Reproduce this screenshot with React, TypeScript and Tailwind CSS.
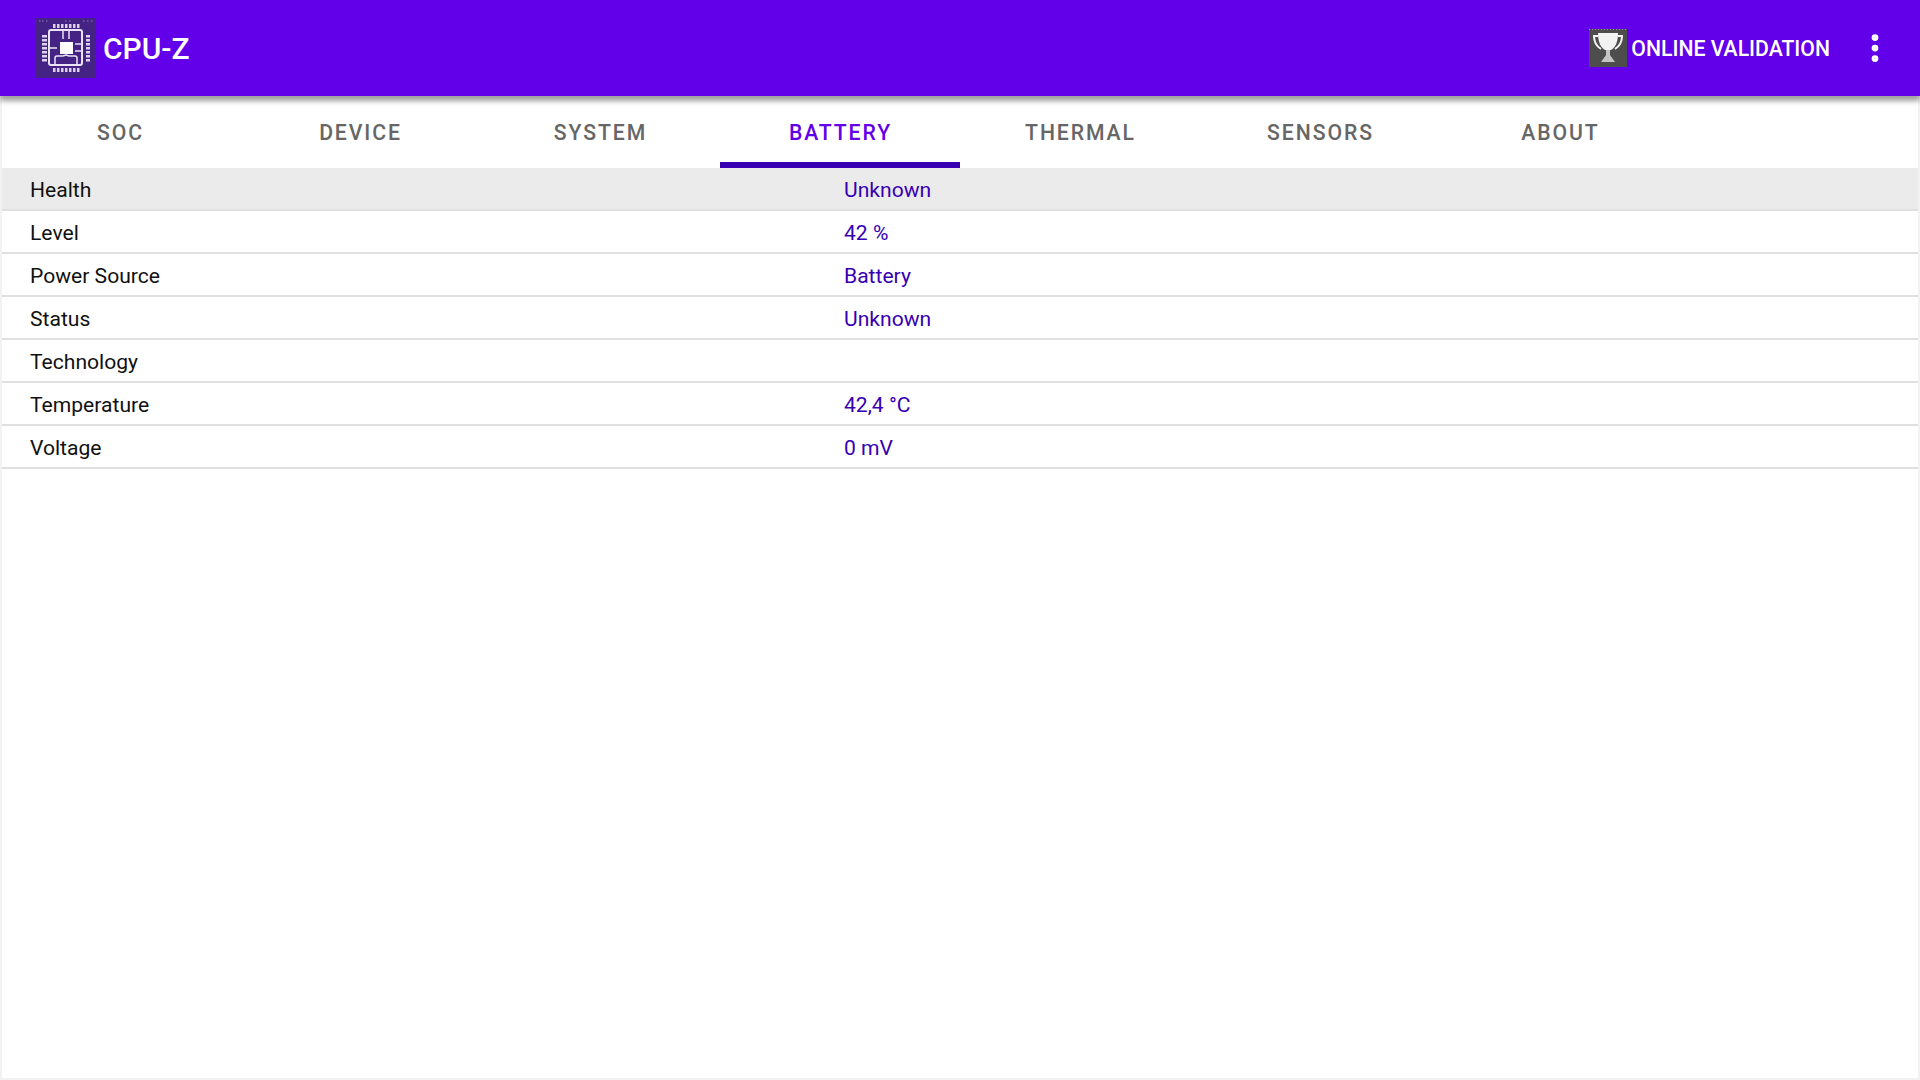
import { EllipsisVertical } from 'lucide-react';

const tabs = ['SOC', 'DEVICE', 'SYSTEM', 'BATTERY', 'THERMAL', 'SENSORS', 'ABOUT'];

const rows = [
    { label: 'Health', value: 'Unknown' },
    { label: 'Level', value: '42 %' },
    { label: 'Power Source', value: 'Battery' },
    { label: 'Status', value: 'Unknown' },
    { label: 'Technology', value: '' },
    { label: 'Temperature', value: '42,4 °C' },
    { label: 'Voltage', value: '0 mV' },
];

const ChipLogo = () => (
    <svg width="60" height="60" viewBox="0 0 60 60" className="shrink-0">
        <rect width="60" height="60" fill="#452385" />
        <path d="M3 3h1.5M6 3h1.5M10 3h1.5M29 3h1.5M33 3h1.5M47 3h1.5M51 3h1.5M55 3h1.5" stroke="#8d78b8" strokeWidth="1.2" />
        <rect x="13" y="12" width="33" height="35" rx="2" fill="none" stroke="#e9e3f3" strokeWidth="2" />
        <rect x="24" y="24" width="13" height="12" fill="#ffffff" />
        {[17, 21, 25, 29, 33, 37, 41].map((p) => (
            <g key={p} fill="#dcd2ec">
                <rect x={p} y="6" width="2.5" height="4" />
                <rect x={p} y="50" width="2.5" height="4" />
                <rect x="6" y={p} width="5" height="2.5" />
                <rect x="50" y={p} width="4" height="2.5" />
            </g>
        ))}
        <path d="M27 13v8M33 13v8M14 30h7M39 26h6M39 33h6M19 46v-6c0-1 1-2 2-2h6l3-1 3 1h6c1 0 2 1 2 2v6" fill="none" stroke="#e9e3f3" strokeWidth="1.5" />
    </svg>
);

const TrophyLogo = () => (
    <svg width="38" height="38" viewBox="0 0 38 38" className="shrink-0">
        <rect width="38" height="38" fill="#4d4d4d" />
        <path d="M0 .5h38" stroke="#9a9a9a" strokeWidth="1" strokeDasharray="1 2" />
        <path d="M9 4h20c0 8-2 14-7 17H16C11 18 9 12 9 4z" fill="#f2f2f2" />
        <path d="M17 21h4v5l5 7H12l5-7z" fill="#c4c4c4" />
        <path d="M9 7H5c0 6 2 10 7 13M29 7h4c0 6-2 10-7 13" fill="none" stroke="#f2f2f2" strokeWidth="2" />
    </svg>
);

export default function App() {
    return (
        <div className="relative flex flex-col w-full h-[1080px] bg-white overflow-hidden font-['Roboto',sans-serif]">
            {/* App bar */}
            <header className="flex items-center h-24 shrink-0 bg-[#6200ea] pl-9 pr-[27px] shadow-[0_5px_5px_rgba(0,0,0,0.38)] z-10">
                <ChipLogo />
                <h1 className="ml-[7px] text-[30px] font-medium text-white">CPU-Z</h1>
                <div className="flex items-center ml-auto">
                    <TrophyLogo />
                    <span className="ml-[4px] pt-[1px] text-[21.2px] font-medium text-white">ONLINE VALIDATION</span>
                    <EllipsisVertical className="ml-[27px] w-9 h-9 text-white" strokeWidth={2.5} />
                </div>
            </header>

            {/* Tabs */}
            <nav className="flex h-[72px] shrink-0">
                {tabs.map((tab) => (
                    <div
                        key={tab}
                        className={`flex items-center justify-center w-60 pl-[1px] pt-[8px] text-[21.2px] font-medium tracking-[0.09em] border-b-[6px] ${tab === 'BATTERY' ? 'text-[#6200ea] border-[#3700b3]' : 'text-[#666666] border-transparent'}`}
                    >
                        {tab}
                    </div>
                ))}
            </nav>

            {/* Battery info */}
            <div className="flex flex-col">
                {rows.map((row, i) => (
                    <div
                        key={row.label}
                        className={`flex items-center h-[43px] pl-[30px] pt-[3px] text-[21.1px] border-b-2 border-[#e0e0e0] ${i === 0 ? 'bg-[#ebebeb]' : ''}`}
                    >
                        <span className="w-[814px] text-[#111111]">{row.label}</span>
                        <span className="text-[#3700b3]">{row.value}</span>
                    </div>
                ))}
            </div>

            {/* Faint window edge */}
            <div className="absolute inset-0 border-2 border-t-0 border-[#f2f2f2] pointer-events-none" />
        </div>
    );
}
